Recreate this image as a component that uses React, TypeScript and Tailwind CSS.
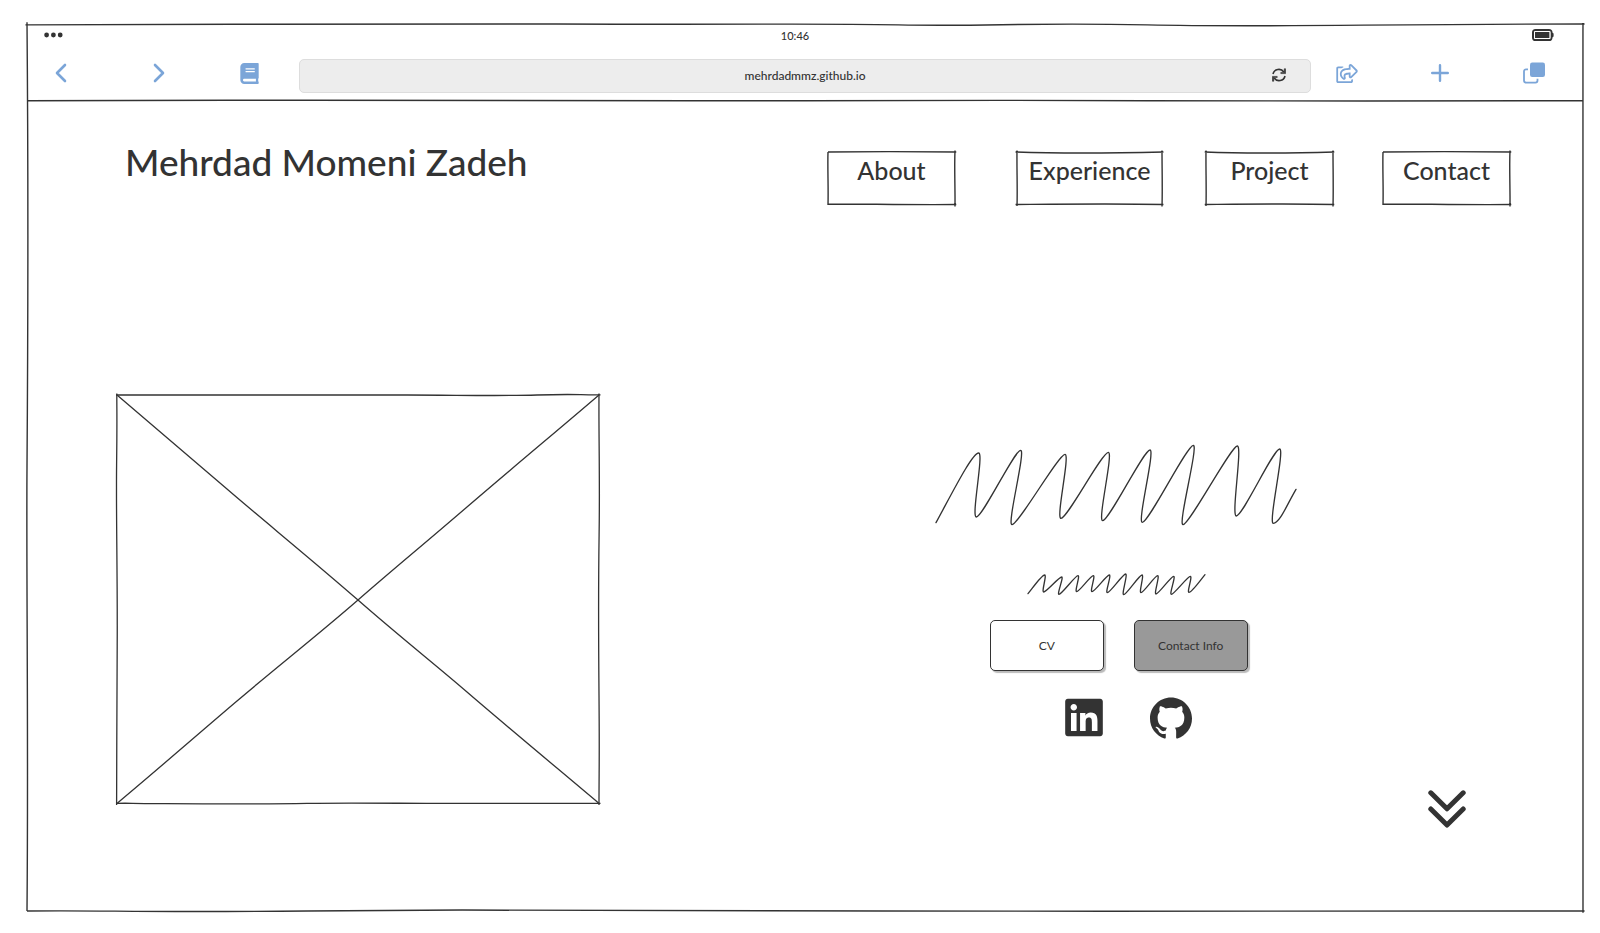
import React from 'react';
import { FaBook, FaLinkedin, FaRegShareSquare } from 'react-icons/fa';
import { SiGithub } from 'react-icons/si';

type Point = [number, number];

/* Hand-drawn outline laid over a box; it stretches with the box. */
function SketchFrame({ variant = 0 }: { variant?: number }) {
  const outlines = [
    'M-0.1 0.1 C12 0.1 20 -0.1 34 0 S50 -0.1 56 0.1 S64 -0.2 72 0.1 S86 0 100.1 0 M100 -0.1 C99.9 30 100.1 60 100 100.2 M100.1 100 C84 99.9 70 100.1 55 100 S30 99.8 18 100 S6 99.9 0 100 M0 100 C0.1 80 -0.05 62 0 50 S0.1 20 0 -0.2',
    'M0 0 C30 -1 65 -1 101 0 M100 -3 C99.4 30 100.2 70 100 103 M101 99 C70 100 30 98 0 98 M0 100 C0.4 70 -0.4 30 0 0',
    'M-1 0 C30 3 70 2 101 0 M100 -3 C100 30 100.4 70 100 103 M101 99 C70 97 40 98 -1 99 M0 102 C0.4 70 -0.2 30 0 -3',
  ];
  return (
    <svg
      aria-hidden="true"
      className="pointer-events-none absolute inset-0 h-full w-full overflow-visible"
      viewBox="0 0 100 100"
      preserveAspectRatio="none"
      fill="none"
      stroke="#333333"
      strokeWidth="1.4"
    >
      <path d={outlines[variant]} vectorEffect="non-scaling-stroke" />
    </svg>
  );
}

/* Turns alternating peaks and valleys into one pen stroke. */
function scribble(points: Point[], bend: number) {
  const last = points.length - 1;
  let d = `M${points[0][0]} ${points[0][1]}`;
  for (let i = 1; i <= last; i++) {
    const [x0, y0] = points[i - 1];
    const [x1, y1] = points[i];
    const reach = i % 2 === 1 ? bend * 1.2 : bend;
    const c1: Point = i === 1 ? [x0 + (x1 - x0) * 0.4, y0 + (y1 - y0) * 0.45] : [x0 + reach, y0];
    const c2: Point = i === last ? [x1 - (x1 - x0) * 0.4, y1 - (y1 - y0) * 0.45] : [x1 - reach, y1];
    d += ` C${c1[0]} ${c1[1]} ${c2[0]} ${c2[1]} ${x1} ${y1}`;
  }
  return d;
}

const headline: Point[] = [
  [45, 278], [173, 69], [166, 261], [299, 61], [273, 284], [432, 73], [420, 265], [562, 67], [545, 272],
  [687, 60], [664, 277], [817, 46], [786, 284], [949, 48], [946, 258], [1076, 57], [1057, 280], [1125, 178],
];

const subline: Point[] = [
  [202, 101], [252, 45], [249, 96], [303, 51], [295, 103], [352, 47], [348, 95], [398, 47], [394, 95], [446, 45],
  [440, 98], [495, 42], [489, 104], [544, 45], [541, 98], [591, 47], [586, 102], [639, 49], [632, 103],
  [689, 49], [685, 97], [733, 44],
];

const links = [
  { label: 'About', box: 'w-[127px]', variant: 1 },
  { label: 'Experience', box: 'w-[145px] ml-[62px]', variant: 2 },
  { label: 'Project', box: 'w-[127px] ml-[44px]', variant: 2 },
  { label: 'Contact', box: 'w-[127px] ml-[50px]', variant: 1 },
];

function BrowserBar() {
  return (
    <div className="relative pb-2">
      <div className="grid h-[22px] grid-cols-3 items-center pr-[29px] pl-[17px]">
        <svg width="19" height="6" viewBox="0 0 19 6" fill="#333333" aria-hidden="true">
          <circle cx="2.6" cy="3" r="2.4" />
          <circle cx="9.4" cy="3" r="2.4" />
          <circle cx="16.2" cy="3" r="2.4" />
        </svg>
        <span className="pt-px pr-2 text-center text-[11px] leading-4 font-medium">10:46</span>
        <svg className="justify-self-end" width="22" height="12" viewBox="0 0 22 12" aria-hidden="true">
          <rect x="1" y="1" width="18.5" height="10" rx="2.6" fill="none" stroke="#333333" strokeWidth="2" />
          <path d="M20 3.5 L21.6 4.5 V7.5 L20 8.5Z" fill="#333333" />
          <rect x="3" y="3" width="14.6" height="6" fill="#333333" />
          <rect x="2.6" y="2.6" width="15.4" height="6.8" fill="none" stroke="#ffffff" strokeWidth="0.8" />
        </svg>
      </div>
      <div className="mt-[13px] flex items-start">
        <div className="grid w-[272px] shrink-0 grid-cols-[98px_87px_1fr] justify-items-start pl-7 text-[#7ba5d8]">
          <button type="button" aria-label="Back" className="flex h-7 items-center">
            <svg width="12" height="20" viewBox="0 0 12 20" fill="none" stroke="currentColor" strokeWidth="2.6" strokeLinecap="round" strokeLinejoin="round">
              <path d="M10 2 L2 10 L10 18" />
            </svg>
          </button>
          <button type="button" aria-label="Forward" className="flex h-7 items-center">
            <svg width="12" height="20" viewBox="0 0 12 20" fill="none" stroke="currentColor" strokeWidth="2.6" strokeLinecap="round" strokeLinejoin="round">
              <path d="M2 2 L10 10 L2 18" />
            </svg>
          </button>
          <button type="button" aria-label="Bookmarks" className="flex h-7 items-center">
            <FaBook className="h-[21px] w-[19px]" />
          </button>
        </div>
        <div className="flex h-[34px] flex-1 items-center rounded-[5px] border border-[#dddddd] bg-[#ededed] pr-6 pl-[38px]">
          <input
            aria-label="Address"
            defaultValue="mehrdadmmz.github.io"
            className="min-w-0 flex-1 bg-transparent text-center text-xs leading-4 font-medium outline-none"
          />
          <button type="button" aria-label="Reload" className="pb-[3px]">
            <svg width="14" height="14" viewBox="0 0 14 14" fill="none" stroke="#333333" strokeWidth="1.6">
              <path d="M1 6 A6 6 0 0 1 11.8 4" />
              <path d="M13 8 A6 6 0 0 1 2.2 10" />
              <path d="M13.6 0.8 V5.6 H8.8 V4.4 H12.2 V0.8Z" fill="#333333" stroke="#333333" strokeWidth="0.6" />
              <path d="M0.4 13.2 V8.4 H5.2 V9.6 H1.8 V13.2Z" fill="#333333" stroke="#333333" strokeWidth="0.6" />
            </svg>
          </button>
        </div>
        <div className="grid w-[272px] shrink-0 grid-cols-[95px_92px_1fr] justify-items-start pl-[25px] text-[#7ba5d8]">
          <button type="button" aria-label="Share" className="flex h-7 items-center">
            <FaRegShareSquare className="h-[19px] w-[22px]" />
          </button>
          <button type="button" aria-label="New tab" className="flex h-7 items-center">
            <svg width="18" height="18" viewBox="0 0 18 18" fill="none" stroke="currentColor" strokeWidth="2.4" strokeLinecap="round">
              <path d="M9 1.2 V16.8 M1.2 9 H16.8" />
            </svg>
          </button>
          <button type="button" aria-label="Tabs" className="flex h-7 items-center">
            <svg width="22" height="22" viewBox="0 0 22 22">
              <rect x="7" y="0.5" width="15" height="14.5" rx="2.2" fill="currentColor" />
              <path d="M5 7.3 H3 A2 2 0 0 0 1 9.3 V18.6 A2 2 0 0 0 3 20.6 H12.5 A2 2 0 0 0 14.5 18.6 V16.8" fill="none" stroke="currentColor" strokeWidth="1.8" />
            </svg>
          </button>
        </div>
      </div>
      <svg
        aria-hidden="true"
        className="pointer-events-none absolute bottom-0 left-0 h-px w-full overflow-visible"
        viewBox="0 0 100 1"
        preserveAspectRatio="none"
        fill="none"
        stroke="#333333"
        strokeWidth="1.4"
      >
        <path d="M0 0.8 C10 1 12 0 18 0.2 S38 1 50 0.7 S62 0 72 0.8 S90 0.4 100 0.7" vectorEffect="non-scaling-stroke" />
      </svg>
    </div>
  );
}

export default function App() {
  return (
    <div className="flex min-h-screen flex-col bg-white pt-6 pr-[17px] pb-[22px] pl-[27px] font-['Lato','Open_Sans',sans-serif] text-[#333333]">
      <div className="relative flex flex-1 flex-col">
        <SketchFrame />
        <BrowserBar />
        <header className="flex items-start justify-between pt-[51px] pr-[73px] pl-[98px]">
          <h1 className="-mt-3 text-[37px] leading-[44px] font-medium">Mehrdad Momeni Zadeh</h1>
          <nav className="flex">
            {links.map((link) => (
              <a
                key={link.label}
                href={`#${link.label.toLowerCase()}`}
                className={`relative h-[53px] pt-0.5 text-center text-[25px] leading-8 font-medium ${link.box}`}
              >
                <SketchFrame variant={link.variant} />
                {link.label}
              </a>
            ))}
          </nav>
        </header>
        <main className="mt-[190px] flex pr-[117px] pb-[83px] pl-[90px]">
          <svg
            role="img"
            aria-label="Portrait"
            className="h-[409px] w-[482px] shrink-0 overflow-visible"
            viewBox="0 0 482 409"
            fill="none"
            stroke="#333333"
            strokeWidth="1.3"
          >
            <path d="M-1 0 C50 0 100 -0.2 145 0 S240 0 290 0 S380 1.2 420 0 S460 0 483.5 -0.2" />
            <path d="M482 -1.5 C481.6 40 483 80 482.1 140 S481.4 230 482 300 S482 370 482 410" />
            <path d="M483.5 408.4 C440 408.4 400 408 350 408.4 S240 407.4 190 408.4 S70 408.8 40 408.6 S10 408 -1 408.4" />
            <path d="M-0.4 410 C-0.2 350 -0.2 320 0.2 250 S-1 120 -0.4 70 S-0.2 20 -0.2 -1.5" />
            <path d="M0 0 C40 34 80 68 110 94 S200 169 241 205 S320 271 350 297 S440 373 482 408.4" />
            <path d="M482 0 C440 36 400 69 350 112 S280 171 241 205 S160 272 120 306 S40 375 0 408.4" />
          </svg>
          <div className="flex-[8]" />
          <section className="flex w-[366px] shrink-0 flex-col items-center pt-[50px]">
            <svg className="h-[80px] w-[360px] self-start overflow-visible" viewBox="45 45 1080 240" fill="none" stroke="#333333" strokeWidth="4" strokeLinecap="round" aria-hidden="true">
              <path d={scribble(headline, 16)} />
            </svg>
            <svg className="mt-[49px] ml-[92px] h-[21px] w-[177px] self-start overflow-visible" viewBox="202 42 531 63" fill="none" stroke="#333333" strokeWidth="4" strokeLinecap="round" aria-hidden="true">
              <path d={scribble(subline, 7)} />
            </svg>
            <div className="mt-[25px] flex gap-[30px]">
              <button type="button" className="h-[51px] w-[114px] rounded-[5px] border border-[#333333] bg-white text-xs shadow-[2px_2px_1px_#bbbbbb]">
                CV
              </button>
              <button type="button" className="h-[51px] w-[114px] rounded-[5px] border border-[#333333] bg-[#999999] text-xs shadow-[2px_2px_1px_#bbbbbb]">
                Contact Info
              </button>
            </div>
            <div className="mt-[25px] flex items-center gap-[47px] pl-5">
              <a href="#linkedin" aria-label="LinkedIn">
                <FaLinkedin className="h-[43px] w-[38px]" />
              </a>
              <a href="#github" aria-label="GitHub">
                <SiGithub className="size-[42px]" />
              </a>
            </div>
          </section>
          <div className="flex-[3]" />
          <button type="button" aria-label="Scroll down" className="mt-[395px] h-[38px] w-[38px] shrink-0">
            <svg width="38" height="38" viewBox="0 0 38 38" fill="none" stroke="#333333" strokeWidth="5" strokeLinecap="round" strokeLinejoin="round">
              <path d="M2.8 2.8 L19 18.8 L35.2 2.8" />
              <path d="M2.8 19 L19 35 L35.2 19" />
            </svg>
          </button>
        </main>
      </div>
    </div>
  );
}
